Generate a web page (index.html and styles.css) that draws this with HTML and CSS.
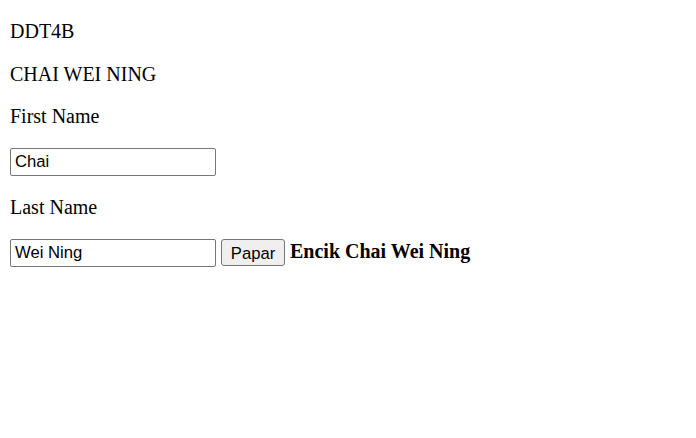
FILE: index.html
```html
<!DOCTYPE html>
<html>
<head>
<meta charset="utf-8">
<link rel="stylesheet" href="styles.css">
</head>
<body>
<p class="line">DDT4B</p>
<p class="line">CHAI WEI NING</p>
<p class="line">First Name</p>
<input class="field" type="text" value="Chai">
<p class="line">Last Name</p>
<div class="row"><input class="field" type="text" value="Wei Ning"> <button class="btn">Papar</button> <b class="result">Encik Chai Wei Ning</b></div>
</body>
</html>
```
FILE: styles.css
```css
html, body {
  background: #ffffff;
}
body {
  margin: 0 10px 10px;
  padding-top: 0.02px;
  font-family: "Liberation Serif", "Times New Roman", serif;
  font-size: 20px;
  color: #000;
}
.line {
  margin: 20px 0;
  line-height: 22.67px;
}
.field {
  box-sizing: border-box;
  width: 206px;
  height: 28px;
  margin: 0;
  padding: 1px 4px;
  border: 1px solid #767676;
  border-radius: 2px;
  font-family: "Liberation Sans", Arial, sans-serif;
  font-size: 16.67px;
  color: #000;
  background: #fff;
  vertical-align: middle;
}
.row {
  display: flex;
  align-items: center;
  gap: 5px;
  line-height: 23px;
}
.btn {
  box-sizing: border-box;
  height: 27px;
  width: 64px;
  margin: 0;
  padding: 2px 8px 0;
  border: 1px solid #767676;
  border-radius: 3px;
  background: #efefef;
  font-family: "Liberation Sans", Arial, sans-serif;
  font-size: 16.67px;
  line-height: 20px;
  color: #000;
}
.result {
  font-weight: bold;
  padding-bottom: 2px;
}
```
